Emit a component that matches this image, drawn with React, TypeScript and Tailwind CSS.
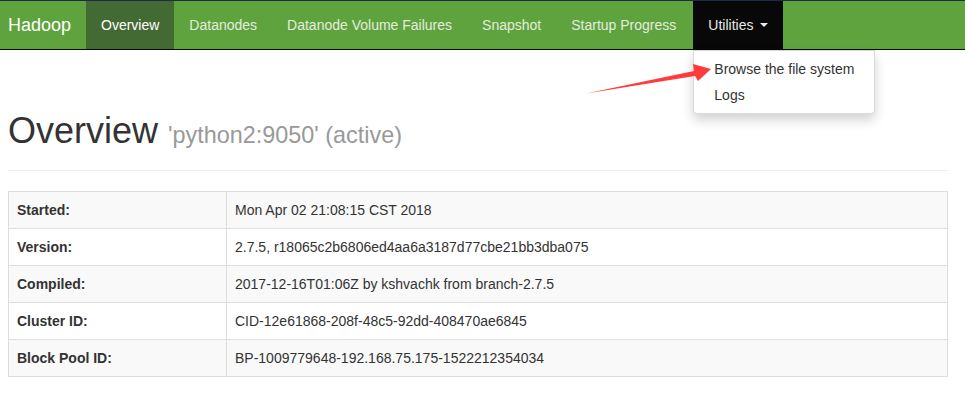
const navItems = [
  { label: "Overview", active: true },
  { label: "Datanodes" },
  { label: "Datanode Volume Failures" },
  { label: "Snapshot" },
  { label: "Startup Progress" },
];

const rows = [
  { label: "Started:", value: "Mon Apr 02 21:08:15 CST 2018" },
  { label: "Version:", value: "2.7.5, r18065c2b6806ed4aa6a3187d77cbe21bb3dba075" },
  { label: "Compiled:", value: "2017-12-16T01:06Z by kshvachk from branch-2.7.5" },
  { label: "Cluster ID:", value: "CID-12e61868-208f-48c5-92dd-408470ae6845" },
  { label: "Block Pool ID:", value: "BP-1009779648-192.168.75.175-1522212354034" },
];

export default function App() {
  return (
    <div className="relative min-h-screen bg-white font-['Liberation_Sans',Arial,sans-serif] text-[14px] leading-[20px] text-[#333]">
      <nav className="relative z-10 flex h-[50px] border-b border-t border-b-[#080808] border-t-[#1d2a4a] bg-[#5fa33e]">
        <a className="flex w-[86px] items-center pl-2 text-[18px] text-white">Hadoop</a>
        <ul className="flex">
          {navItems.map((item) => (
            <li key={item.label}>
              <a
                className={
                  item.active
                    ? "flex h-full items-center bg-[#446a33] px-[15px] text-white"
                    : "flex h-full items-center px-[15px] text-[#e4ecdf]"
                }
              >
                {item.label}
              </a>
            </li>
          ))}
          <li className="relative ml-[2px]">
            <a className="flex h-full items-center bg-[#080808] px-[15px] text-[#e8e8e8]">
              Utilities
              <span className="ml-[7px] inline-block h-0 w-0 border-x-4 border-t-4 border-x-transparent border-t-[#e8e8e8]" />
            </a>
            <ul className="absolute left-0 top-[calc(100%+1px)] w-[182px] rounded-b border border-[rgba(0,0,0,0.15)] bg-white py-[5px] shadow-[0_6px_12px_rgba(0,0,0,0.175)]">
              <li className="whitespace-nowrap px-5 py-[3px] text-[#333]">Browse the file system</li>
              <li className="whitespace-nowrap px-5 py-[3px] text-[#333]">Logs</li>
            </ul>
          </li>
        </ul>
      </nav>

      <main className="px-2">
        <div className="w-[940px]">
          <div className="mt-[61px] border-b border-[#eee] pb-[9px]">
            <h1 className="mb-[10px] text-[36px] leading-[1.1] text-[#333]">
              Overview{" "}
              <small className="text-[23.4px] text-[#999]">'python2:9050' (active)</small>
            </h1>
          </div>

          <table className="mt-5 w-full border-collapse border border-[#ddd]">
            <tbody>
              {rows.map((row, i) => (
                <tr key={row.label} className={i % 2 === 0 ? "bg-[#f9f9f9]" : "bg-white"}>
                  <th className="w-[218px] border border-[#ddd] p-2 text-left font-bold">{row.label}</th>
                  <td className="border border-[#ddd] p-2">{row.value}</td>
                </tr>
              ))}
            </tbody>
          </table>
        </div>
      </main>

      <svg
        className="pointer-events-none absolute left-[580px] top-[58px] z-20"
        width="135"
        height="40"
        viewBox="580 58 135 40"
      >
        <polygon points="586,93.5 694,71 693,64 711,69 698,81 695,76" fill="#ff3b3b" />
      </svg>
    </div>
  );
}
